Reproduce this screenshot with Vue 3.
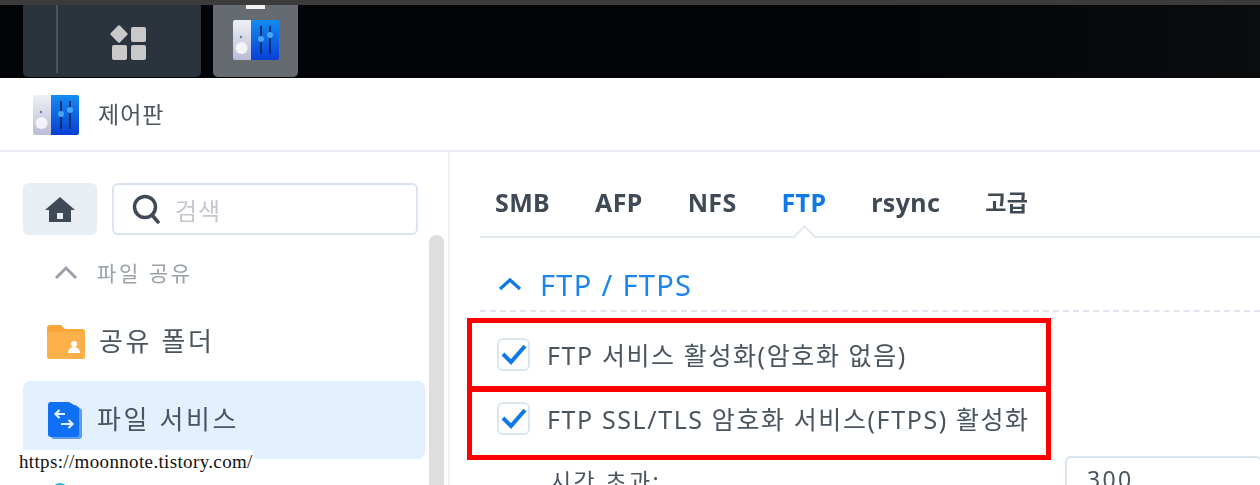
<template>
  <div class="screen">
    <div class="shot">
      <div class="desktop">
        <div class="topline"></div>
        <div class="taskbar">
          <div class="task task-main">
            <div class="task-handle"></div>
            <div class="task-apps">
              <svg width="38" height="36" viewBox="0 0 38 36">
                <rect x="2.5" y="3.5" width="13" height="13" rx="1.5" transform="rotate(45 9 10)" fill="#c9c9c9" />
                <rect x="21" y="3" width="15" height="15" rx="2" fill="#c9c9c9" />
                <rect x="2" y="21" width="15" height="15" rx="2" fill="#c9c9c9" />
                <rect x="21" y="21" width="15" height="15" rx="2" fill="#c9c9c9" />
              </svg>
            </div>
          </div>
          <div class="task task-active">
            <span class="indicator"></span>
            <svg class="panel-icon" width="46" height="42" viewBox="0 0 46 42">
              <defs>
                <linearGradient id="pg1" x1="0" y1="0" x2="0" y2="1">
                  <stop offset="0" stop-color="#eef0f7" />
                  <stop offset="1" stop-color="#b9bcd6" />
                </linearGradient>
                <linearGradient id="pg2" x1="0" y1="0" x2="0" y2="1">
                  <stop offset="0" stop-color="#128cf0" />
                  <stop offset="1" stop-color="#0a3fd6" />
                </linearGradient>
              </defs>
              <path d="M2 0h17v40H2a2 2 0 0 1-2-2V2a2 2 0 0 1 2-2z" fill="url(#pg1)" />
              <path d="M18 0h26a2 2 0 0 1 2 2v36a2 2 0 0 1-2 2H18z" fill="url(#pg2)" />
              <circle cx="8" cy="17" r="1.2" fill="#77798c" />
              <circle cx="8.5" cy="28" r="6" fill="#f4f4f8" />
              <path d="M28 6v28M37 6v28" stroke="#0c2f7a" stroke-width="2" />
              <circle cx="28" cy="19" r="3" fill="#4aa5f5" />
              <circle cx="37" cy="15" r="3" fill="#4aa5f5" />
            </svg>
          </div>
        </div>
      </div>

      <div class="window">
        <header class="win-head">
          <svg class="panel-icon head-icon" width="46" height="42" viewBox="0 0 46 42">
            <path d="M2 0h17v40H2a2 2 0 0 1-2-2V2a2 2 0 0 1 2-2z" fill="url(#pg1)" />
            <path d="M18 0h26a2 2 0 0 1 2 2v36a2 2 0 0 1-2 2H18z" fill="url(#pg2)" />
            <circle cx="8" cy="17" r="1.2" fill="#77798c" />
            <circle cx="8.5" cy="28" r="6" fill="#f4f4f8" />
            <path d="M28 6v28M37 6v28" stroke="#0c2f7a" stroke-width="2" />
            <circle cx="28" cy="19" r="3" fill="#4aa5f5" />
            <circle cx="37" cy="15" r="3" fill="#4aa5f5" />
          </svg>
          <span class="win-title">제어판</span>
        </header>

        <div class="win-body">
          <aside class="sidebar">
            <div class="side-top">
              <button class="home">
                <svg width="30" height="26" viewBox="0 0 30 26">
                  <path d="M15 1 0 14h4v12h22V14h4zM12 17h6v6h-6z" fill-rule="evenodd" fill="#3f4a56" />
                </svg>
              </button>
              <div class="search">
                <svg width="28" height="30" viewBox="0 0 28 30">
                  <circle cx="13" cy="13" r="10.5" fill="none" stroke="#3f4a56" stroke-width="3.5" />
                  <path d="m20 21 6 7" stroke="#3f4a56" stroke-width="3.5" stroke-linecap="round" />
                </svg>
                <span>검색</span>
              </div>
            </div>
            <div class="side-scroll">
              <div class="side-list">
                <div class="group">
                  <svg width="24" height="14" viewBox="0 0 24 14">
                    <path d="m2 13 10-10 10 10" fill="none" stroke="#9aa1a9" stroke-width="3" />
                  </svg>
                  <span>파일 공유</span>
                </div>
                <div v-for="item in items" :key="item.label" class="item" :class="{ selected: item.selected }">
                  <svg v-if="item.icon === 'folder'" width="38" height="34" viewBox="0 0 38 34">
                    <path d="M0 3a3 3 0 0 1 3-3h11l4 4h17a3 3 0 0 1 3 3v24a3 3 0 0 1-3 3H3a3 3 0 0 1-3-3z" fill="#f9a63a" />
                    <path d="M0 7h38v24a3 3 0 0 1-3 3H3a3 3 0 0 1-3-3z" fill="#fbb04a" />
                    <circle cx="27" cy="19" r="3" fill="#fff" />
                    <path d="M21 28c0-4 3-6 6-6s6 2 6 6z" fill="#fff" />
                  </svg>
                  <svg v-else class="file-icon" width="35" height="37" viewBox="0 0 35 37">
                    <path d="M3 3h25l6 5v26a3 3 0 0 1-3 3H6a3 3 0 0 1-3-3z" fill="#5c9cf8" />
                    <path d="M3 0h18l10 6v26a3 3 0 0 1-3 3H3a3 3 0 0 1-3-3V3a3 3 0 0 1 3-3z" fill="#0f6ff5" />
                    <path d="M17 12H8m3.500-4-4 4 4 4M13 22h11m-3.500-4 4 4-4 4" fill="none" stroke="#e6f0ff" stroke-width="2.2" />
                  </svg>
                  <span class="item-label">{{ item.label }}</span>
                </div>
                <div class="item-next"><i></i></div>
              </div>
              <div class="scrollbar"></div>
            </div>
          </aside>

          <main class="content">
            <nav class="tabs">
              <span
                v-for="tab in tabs"
                :key="tab"
                class="tab"
                :class="{ on: tab === 'FTP', kr: tab === '고급' }"
              >{{ tab }}</span>
            </nav>
            <div class="section-title">
              <svg width="24" height="14" viewBox="0 0 24 14">
                <path d="m2 12 10-9 10 9" fill="none" stroke="#0f7ae5" stroke-width="3.2" />
              </svg>
              <span>FTP / FTPS</span>
            </div>
            <div class="rows">
              <label v-for="row in rows" :key="row" class="check-row">
                <span class="box">
                  <svg width="26" height="22" viewBox="0 0 26 22">
                    <path d="m2 11 8 8L24 3" fill="none" stroke="#0f7ae5" stroke-width="4" />
                  </svg>
                </span>
                <span>{{ row }}</span>
              </label>
              <div class="field">
                <span class="field-label">시간 초과:</span>
                <div class="num">300</div>
              </div>
            </div>
          </main>
        </div>
      </div>
    </div>

    <div class="mark mark-one"></div>
    <div class="mark mark-two"></div>
    <div class="url">https://moonnote.tistory.com/</div>
  </div>
</template>

<script setup>
const tabs = ['SMB', 'AFP', 'NFS', 'FTP', 'rsync', '고급']
const items = [
  { label: '공유 폴더', icon: 'folder' },
  { label: '파일 서비스', icon: 'file', selected: true },
]
const rows = ['FTP 서비스 활성화(암호화 없음)', 'FTP SSL/TLS 암호화 서비스(FTPS) 활성화']
</script>

<style>
html, body { background: #fff; overflow: hidden; }
</style>

<style scoped>
.screen {
  position: relative;
  width: 1260px;
  height: 485px;
  overflow: hidden;
  background: #fff;
  font-family: "Noto Sans", "Noto Sans CJK KR", sans-serif;
}
.shot { filter: blur(0.5px); }

.desktop { height: 78px; background: linear-gradient(90deg, #030408 70%, #0b0c0e); }
.topline { height: 5px; background: #3b3b3b; }
.taskbar { display: flex; gap: 12px; padding-left: 23px; height: 72px; }
.task { height: 72px; border-radius: 0 0 5px 5px; }
.task-main { width: 178px; display: flex; background: #2b333d; }
.task-handle { width: 33px; border-right: 2px solid #4c545d; margin-bottom: 4px; }
.task-apps { flex: 1; display: flex; justify-content: center; padding-top: 19px; padding-right: 2px; }
.task-active {
  position: relative;
  width: 85px;
  background: #666b71;
  display: flex;
  justify-content: center;
  padding-top: 15px;
  box-sizing: border-box;
}
.indicator {
  position: absolute;
  top: 0;
  left: 33px;
  width: 19px;
  height: 4px;
  background: #f2f2f2;
}

.window {
  height: 407px;
  display: flex;
  flex-direction: column;
  border-radius: 8px 0 0 0;
  background: #fff;
}
.win-head {
  height: 74px;
  flex: none;
  box-sizing: border-box;
  border-bottom: 2px solid #e8edf4;
  display: flex;
  align-items: center;
  padding-left: 33px;
  padding-bottom: 2px;
}
.head-icon { margin-top: 6px; }
.win-title { margin-left: 19px; font-size: 23px; letter-spacing: 1px; color: #4a5560; }

.win-body { flex: 1; display: flex; min-height: 0; }
.sidebar {
  width: 450px;
  flex: none;
  box-sizing: border-box;
  border-right: 2px solid #eef1f6;
  padding: 31px 0 0 23px;
}
.side-top { display: flex; gap: 15px; }
.home {
  width: 74px;
  height: 52px;
  border: 0;
  padding: 0;
  background: #e9eef4;
  border-radius: 6px;
  display: flex;
  align-items: center;
  justify-content: center;
}
.search {
  width: 306px;
  height: 52px;
  box-sizing: border-box;
  border: 2px solid #d9e4f0;
  border-radius: 6px;
  display: flex;
  align-items: center;
  padding-left: 18px;
  gap: 15px;
  font-size: 24px;
  letter-spacing: 1px;
  color: #c3c8cf;
}
.side-scroll { display: flex; gap: 4px; }
.side-list { width: 402px; flex: none; }
.group {
  height: 68px;
  box-sizing: border-box;
  padding: 6px 0 0 31px;
  display: flex;
  align-items: center;
  gap: 19px;
  font-size: 21px;
  letter-spacing: 2.6px;
  color: #9aa1a9;
}
.item {
  height: 78px;
  display: flex;
  align-items: center;
  gap: 14px;
  padding-left: 24px;
  border-radius: 8px;
  font-size: 26px;
  letter-spacing: 2.6px;
  color: #4a5560;
}
.item-label { margin-bottom: 4px; }
.item.selected { background: #e3f0fd; }
.file-icon { margin-left: 1px; }
.item-next { padding: 24px 0 0 28px; }
.item-next i {
  display: block;
  width: 18px;
  height: 18px;
  border-radius: 50%;
  background: #17bfd0;
}
.scrollbar { width: 15px; height: 300px; background: #dedede; border-radius: 7px 7px 0 0; }

.content { flex: 1; min-width: 0; padding: 30px 0 0 30px; }
.tabs {
  display: flex;
  gap: 45px;
  height: 56px;
  box-sizing: border-box;
  padding-left: 15px;
  border-bottom: 2px solid #e3e9f0;
  font-size: 25px;
  letter-spacing: 0.35px;
  font-weight: 700;
  color: #3f4a56;
  line-height: 40px;
}
.tab { position: relative; height: 54px; }
.tab.kr { font-size: 23px; }
.tab.on { color: #0f7ae5; }
.tab.on::after {
  content: "";
  position: absolute;
  left: 50%;
  bottom: -7px;
  width: 13px;
  height: 13px;
  margin-left: -7px;
  background: #fff;
  border-left: 2px solid #e3e9f0;
  border-top: 2px solid #e3e9f0;
  transform: rotate(45deg);
}
.section-title {
  height: 74px;
  box-sizing: border-box;
  padding: 20px 0 0 18px;
  border-bottom: 2px dashed #dfe6ee;
  display: flex;
  align-items: center;
  gap: 18px;
  font-size: 29px;
  letter-spacing: 1.3px;
  color: #1a85ea;
}
.rows { padding: 10px 0 0 17px; }
.check-row {
  height: 64px;
  display: flex;
  align-items: center;
  gap: 17px;
  font-size: 25px;
  letter-spacing: 1.6px;
  color: #4a5560;
}
.box {
  width: 33px;
  height: 33px;
  box-sizing: border-box;
  border: 2px solid #dbe5f0;
  border-radius: 6px;
  display: flex;
  align-items: center;
  justify-content: center;
}
.field {
  display: flex;
  margin-top: 6px;
  padding-left: 53px;
  font-size: 23px;
  letter-spacing: 2.4px;
  color: #4a5560;
}
.field-label { width: 515px; flex: none; padding-top: 11px; line-height: 28px; white-space: nowrap; }
.num {
  width: 197px;
  height: 50px;
  flex: none;
  box-sizing: border-box;
  border: 2px solid #d9e4f0;
  border-radius: 6px;
  padding: 2px 0 0 20px;
  line-height: 38px;
}

/* red annotation boxes and watermark drawn on top of the screenshot */
.mark {
  position: absolute;
  left: 467px;
  width: 584px;
  box-sizing: border-box;
  border: 5px solid #f00;
}
.mark-one { top: 318px; height: 73px; }
.mark-two { top: 387px; height: 73px; }
.url {
  position: absolute;
  left: 19px;
  top: 450px;
  width: 234px;
  height: 23px;
  background: #fff;
  font-family: "Liberation Serif", serif;
  font-size: 19px;
  letter-spacing: 0.35px;
  line-height: 23px;
  color: #111;
  white-space: nowrap;
}
</style>
